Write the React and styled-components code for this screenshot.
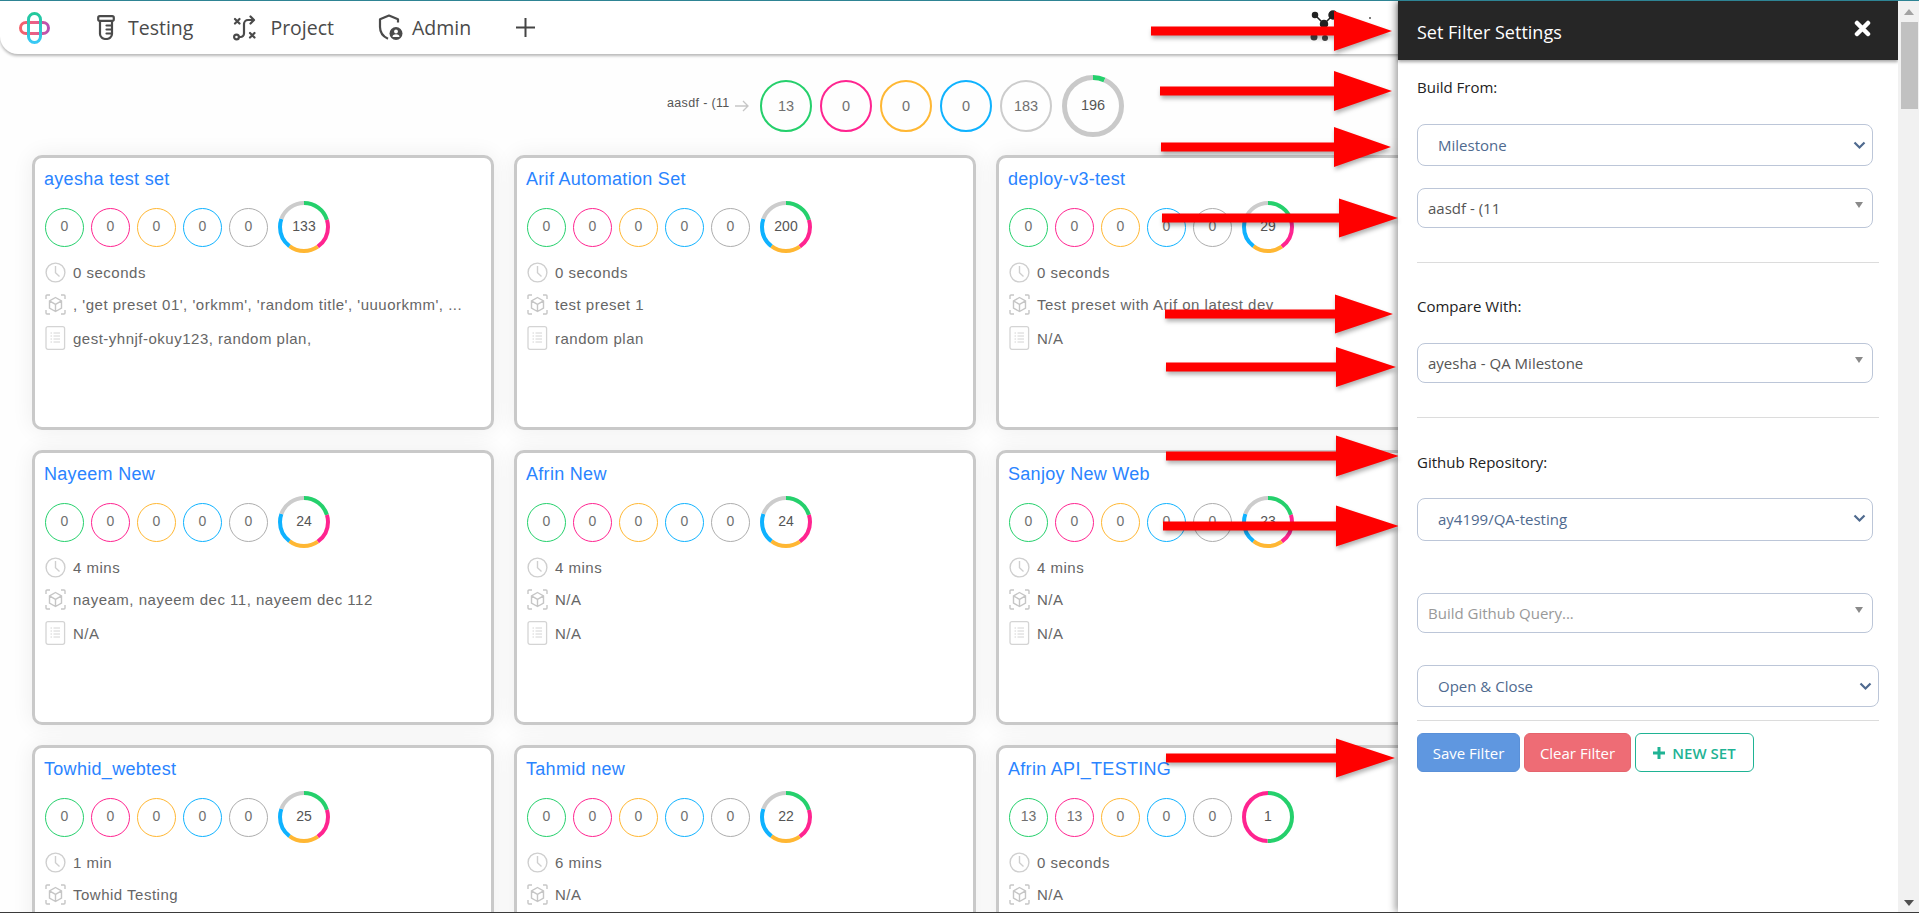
import React from "react";
import styled, { createGlobalStyle } from "styled-components";

const GREEN = "#25d06c";
const PINK = "#ff2490";
const AMBER = "#ffb733";
const BLUE = "#0fb2ff";
const GREY = "#adadad";
const LIGHT = "#cccccc";

const Global = createGlobalStyle`
  html, body { margin: 0; padding: 0; height: 100%; overflow: hidden; background: #fff; }
  #root { height: 100%; }
  * { box-sizing: border-box; }
`;

const Frame = styled.div`
  width: 100vw; height: 100vh; display: flex; overflow: hidden;
  border-top: 1px solid #2e8494; border-bottom: 1px solid #3a3a3a;
  font-family: "Open Sans", sans-serif; background: #fff;
`;
const Main = styled.main`
  flex: 1; min-width: 0; position: relative; overflow: hidden; background: #fefefe;
`;
const TopBar = styled.header`
  height: 53px; display: flex; align-items: center; background: #fff;
  border-bottom-left-radius: 18px; padding-left: 19px;
  box-shadow: 0 2px 3px rgba(0,0,0,.28);
`;
const NavItem = styled.div`
  display: flex; align-items: center; margin-left: ${p => p.$ml}px; gap: ${p => p.$gap}px;
  font-size: 19.5px; color: #4a4a4a; line-height: 24px;
  svg { display: block; flex: none; }
`;
const Summary = styled.section`
  height: 101px; display: flex; align-items: center; padding: 2px 0 0 667px;
`;
const SummaryLabel = styled.span`
  font: 12.5px "Liberation Sans", sans-serif; color: #555; letter-spacing: .35px; width: 64px; white-space: nowrap;
  margin-top: -5px;
`;
const SummaryArrow = styled.svg`
  width: 14px; height: 12px; margin: 0 11px 0 4px; flex: none;
`;
const SummaryCircles = styled.div`
  display: flex; align-items: center; gap: 8px;
  & > :last-child { margin-left: 2px; }
`;
const Grid = styled.section`
  display: grid; grid-template-columns: repeat(3, 462px); grid-auto-rows: 275px; gap: 20px;
  padding-left: 32px;
`;
const Card = styled.article`
  border: 3px solid #c9c9c9; border-radius: 10px; background: #fff; padding: 10px;
  box-shadow: 0 0 22px rgba(0,0,0,.07);
  font-family: "Liberation Sans", sans-serif; overflow: hidden;
`;
const CardTitle = styled.h3`
  margin: 0 0 0 -1px; font-size: 18px; font-weight: 400; color: #2a84ff; line-height: 22px; height: 22px; letter-spacing: .3px;
`;
const Stats = styled.div`
  display: flex; align-items: center; gap: 7px; margin-top: 11px; height: 52px;
  & > :last-child { margin-left: 3px; }
`;
const Circle = styled.div`
  width: ${p => p.$size}px; height: ${p => p.$size}px; border-radius: 50%;
  border: ${p => p.$bw}px solid ${p => p.$color}; flex: none;
  display: flex; align-items: center; justify-content: center;
  font: ${p => p.$fs}px "Liberation Sans", sans-serif; color: #707070; padding-bottom: ${p => p.$pb}px;
`;
const RingWrap = styled.div`
  width: ${p => p.$size}px; height: ${p => p.$size}px; position: relative; flex: none;
  svg { display: block; }
`;
const RingValue = styled.span`
  position: absolute; inset: 0; display: flex; align-items: center; justify-content: center;
  font: ${p => p.$fs}px "Liberation Sans", sans-serif; color: ${p => p.$color}; padding-bottom: 2px;
`;
const Meta = styled.div`
  display: flex; align-items: center; gap: 7px; height: 24px; margin-top: ${p => p.$mt}px;
  font-size: 15px; color: #666; letter-spacing: .5px; white-space: nowrap;
  svg { display: block; flex: none; }
`;
const Panel = styled.aside`
  position: absolute; top: 0; right: 0; bottom: 0; width: 500px; background: #fff;
  box-shadow: -3px 0 7px rgba(0,0,0,.35);
`;
const PanelHeader = styled.div`
  height: 59px; background: #262626; display: flex; align-items: center; justify-content: space-between;
  padding: 0 27px 0 19px; color: #fff; font-size: 18px; box-shadow: 0 2px 3px rgba(0,0,0,.35);
  svg { display: block; margin-top: -5px; }
  span { margin-top: 3px; }
`;
const PanelBody = styled.div`
  padding-left: 19px; width: 481px;
`;
const Label = styled.div`
  font-size: 15px; line-height: 20px; color: #222; margin-top: ${p => p.$mt}px;
`;
const Select = styled.div`
  height: ${p => p.$h}px; width: ${p => p.$w || 456}px; margin-top: ${p => p.$mt}px;
  border: 1px solid #bcc6d8; border-radius: 8px; background: #fff;
  display: flex; align-items: center; justify-content: space-between;
  padding-left: ${p => p.$native ? 20 : 10}px; padding-right: ${p => p.$native ? 6 : 10}px;
  padding-bottom: ${p => p.$pb || 0}px;
  font-size: 15px; color: ${p => p.$native ? "#4f6a8f" : p.$muted ? "#999" : "#555"};
  svg { display: block; flex: none; }
`;
const Triangle = styled.i`
  width: 0; height: 0; border-left: 4px solid transparent; border-right: 4px solid transparent;
  border-top: 6px solid #8a8a8a; margin-top: -7px; margin-right: -1px;
`;
const Divider = styled.hr`
  margin: ${p => p.$mt}px 0 0; border: 0; border-top: 1px solid #dcdcdc; height: 0;
`;
const Buttons = styled.div`
  display: flex; gap: 4px; margin-top: 12px;
`;
const Button = styled.button`
  height: 39px; width: ${p => p.$w}px; border-radius: 6px; font: 15px "Open Sans", sans-serif; padding: 0;
  color: #fff; background: ${p => p.$bg}; border: 1px solid ${p => p.$bd};
`;
const OutlineButton = styled(Button)`
  color: #1fb394; background: #fff; border-color: #1fb394; font-weight: 600; font-size: 15px;
  display: flex; align-items: center; justify-content: center; gap: 7px;
`;
const Scrollbar = styled.div`
  width: 21px; flex: none; background: #f1f1f1; display: flex; flex-direction: column; align-items: center;
  padding: 8px 0 6px 1px; position: relative; z-index: 3;
`;
const Thumb = styled.div`
  width: 17px; height: 87px; background: #c1c1c1; margin-top: 7px; flex: none;
`;
const ScrollSpacer = styled.div`flex: 1;`;
const ArrowLayer = styled.svg`
  position: absolute; left: 0; top: -1px; width: 1398px; height: 913px; pointer-events: none;
  filter: drop-shadow(1px 3px 2px rgba(0,0,0,.3));
`;
const Network = styled.svg`
  position: absolute; left: 1310px; top: 8px;
`;

const Ring = ({ size, stroke, segments, value, fs = 14, color = "#555" }) => {
  const r = (size - stroke) / 2;
  const c = 2 * Math.PI * r;
  let off = 0;
  return (
    <RingWrap $size={size}>
      <svg width={size} height={size}>
        <g transform={`rotate(-90 ${size / 2} ${size / 2})`}>
          {segments.map(([col, f], i) => {
            const el = (
              <circle key={i} cx={size / 2} cy={size / 2} r={r} fill="none" stroke={col} strokeWidth={stroke}
                strokeDasharray={`${f * c} ${c}`} strokeDashoffset={-off * c} />
            );
            off += f;
            return el;
          })}
        </g>
      </svg>
      <RingValue $fs={fs} $color={color}>{value}</RingValue>
    </RingWrap>
  );
};

const EVEN = [[GREEN, .2], [PINK, .2], [AMBER, .2], [BLUE, .2], [LIGHT, .2]];
const SPLIT = [[GREEN, .5], [PINK, .5]];

const Clock = () => (
  <svg width="21" height="21" viewBox="0 0 21 21" fill="none" stroke="#cfcfcf" strokeWidth="1.4">
    <circle cx="10.5" cy="10.5" r="9.4" /><path d="M10.5 4v6.8l4 3.6" />
  </svg>
);
const Cube = () => (
  <svg width="21" height="21" viewBox="0 0 21 21" fill="none" stroke="#c6c6c6" strokeWidth="1.4">
    <path d="M1 5V2a1 1 0 0 1 1-1h3M16 1h3a1 1 0 0 1 1 1v3M20 16v3a1 1 0 0 1-1 1h-3M5 20H2a1 1 0 0 1-1-1v-3" />
    <path d="M10.5 3.500l6 3.400v7.200l-6 3.400-6-3.400V6.900zM4.500 6.900l6 3.500 6-3.500M10.500 10.400v7.100" />
  </svg>
);
const Doc = () => (
  <svg width="21" height="24" viewBox="0 0 21 24" fill="none" stroke="#d4d4d4">
    <rect x="1" y=".7" width="18.600" height="22.600" rx="2" strokeWidth="1.300" />
    <path d="M8.500 7h6.500M8.500 10h6.500M8.500 13h6.500M8.500 16h6.500M5.500 7h1.500M5.500 10h1.500M5.500 13h1.500M5.500 16h1.500" strokeWidth="1" />
  </svg>
);

const Chevron = () => (
  <svg width="13" height="9" viewBox="0 0 13 9" fill="none" stroke="#4f6a8f" strokeWidth="2.2"><path d="M1.5 1.5l5 5 5-5" /></svg>
);

const Logo = () => (
  <svg width="31" height="32" viewBox="0 0 31 32" fill="none" strokeWidth="3">
    <defs>
      <linearGradient id="lh" x1="0" x2="1" y1="0" y2="0"><stop offset="0" stopColor="#f4606a" /><stop offset=".55" stopColor="#e8608a" /><stop offset="1" stopColor="#b64fb4" /></linearGradient>
      <linearGradient id="lv" x1="0" x2="0" y1="0" y2="1"><stop offset="0" stopColor="#23c99a" /><stop offset=".5" stopColor="#2fc7c8" /><stop offset="1" stopColor="#38c8f5" /></linearGradient>
    </defs>
    <rect x="1.5" y="10.500" width="28" height="11" rx="5.500" stroke="url(#lh)" />
    <rect x="9.500" y="1.500" width="12" height="29" rx="6" stroke="url(#lv)" />
    <path d="M9.500 10.500h12" stroke="url(#lh)" />
  </svg>
);
const TubeIcon = () => (
  <svg width="18" height="25" viewBox="0 0 18 25" fill="none" stroke="#4a4a4a" strokeWidth="2.2" strokeLinecap="round">
    <rect x="1.2" y="1.2" width="15.6" height="4.6" rx="1.6" />
    <path d="M3 6v13a6 5 0 0 0 12 0V6M9.5 10.5H15M9.5 14.5H15M9.5 18.5H15" />
  </svg>
);
const RouteIcon = () => (
  <svg width="24" height="26" viewBox="0 0 24 26" fill="none" stroke="#4a4a4a" strokeWidth="2.2" strokeLinecap="round" strokeLinejoin="round">
    <path d="M2 4l4.5 4.5M6.5 4L2 8.5M17 18l4.5 4.5M21.500 18L17 22.500" />
    <circle cx="3.500" cy="22" r="2.400" />
    <path d="M5.900 22h1.600a3.500 3.500 0 0 0 3.500-3.500V9a4 4 0 0 1 4-4h5M17.500 1.500L21 5l-3.500 3.500" />
  </svg>
);
const ShieldIcon = () => (
  <svg width="25" height="27" viewBox="0 0 25 27" fill="none">
    <path d="M20 8.500V5.200L11 1.500 2 5.200V13c0 5.500 3.700 9.800 8 11.800" stroke="#4a4a4a" strokeWidth="2.200" strokeLinejoin="round" />
    <circle cx="18" cy="19.500" r="6.500" fill="#4a4a4a" />
    <circle cx="18" cy="17.500" r="1.900" fill="#fff" />
    <path d="M14.500 23a3.500 2.800 0 0 1 7 0z" fill="#fff" />
  </svg>
);
const PlusIcon = () => (
  <svg width="19" height="19" viewBox="0 0 19 19" stroke="#444" strokeWidth="2"><path d="M9.500 0v19M0 9.500h19" /></svg>
);

const ARROWS = [
  [1151, 31, 1334, 20, 1392], [1160, 91, 1334, 20, 1392], [1161, 147, 1334, 20, 1391],
  [1162, 218, 1339, 19.500, 1398], [1165, 314, 1335, 19.500, 1393], [1166, 367, 1336, 20, 1396],
  [1166, 456, 1336, 20.500, 1399], [1163, 526, 1336, 20.500, 1399], [1166, 758, 1336, 19.500, 1395],
];
const arrowPoints = ([x, y, b, h, t]) =>
  `${x},${y - 4.500} ${b},${y - 4.500} ${b},${y - h} ${t},${y} ${b},${y + h} ${b},${y + 4.500} ${x},${y + 4.500}`;

const CARDS = [
  { title: "ayesha test set", total: 133, time: "0 seconds", presets: ", 'get preset 01', 'orkmm', 'random title', 'uuuorkmm', ...", plans: "gest-yhnjf-okuy123, random plan," },
  { title: "Arif Automation Set", total: 200, time: "0 seconds", presets: "test preset 1", plans: "random plan" },
  { title: "deploy-v3-test", total: 29, time: "0 seconds", presets: "Test preset with Arif on latest dev", plans: "N/A" },
  { title: "Nayeem New", total: 24, time: "4 mins", presets: "nayeam, nayeem dec 11, nayeem dec 112", plans: "N/A" },
  { title: "Afrin New", total: 24, time: "4 mins", presets: "N/A", plans: "N/A" },
  { title: "Sanjoy New Web", total: 23, time: "4 mins", presets: "N/A", plans: "N/A" },
  { title: "Towhid_webtest", total: 25, time: "1 min", presets: "Towhid Testing" },
  { title: "Tahmid new", total: 22, time: "6 mins", presets: "N/A" },
  { title: "Afrin API_TESTING", total: 1, time: "0 seconds", presets: "N/A", counts: [13, 13, 0, 0, 0], segs: SPLIT },
];
const COLORS = [GREEN, PINK, AMBER, BLUE, GREY];

const SetCard = ({ title, total, time, presets, plans, counts = [0, 0, 0, 0, 0], segs = EVEN }) => (
  <Card>
    <CardTitle>{title}</CardTitle>
    <Stats>
      {counts.map((n, i) => (
        <Circle key={i} $size={39} $bw={1.500} $color={COLORS[i]} $fs={14} $pb={2}>{n}</Circle>
      ))}
      <Ring size={52} stroke={4} segments={segs} value={total} fs={14} />
    </Stats>
    <Meta $mt={7}><Clock /><span>{time}</span></Meta>
    <Meta $mt={8}><Cube /><span>{presets}</span></Meta>
    {plans && <Meta $mt={10}><Doc /><span>{plans}</span></Meta>}
  </Card>
);

export default function App() {
  return (
    <>
      <Global />
      <Frame>
        <Main>
          <TopBar>
            <Logo />
            <NavItem $ml={47} $gap={13}><TubeIcon /><span>Testing</span></NavItem>
            <NavItem $ml={40} $gap={13}><RouteIcon /><span>Project</span></NavItem>
            <NavItem $ml={44} $gap={9}><ShieldIcon /><span>Admin</span></NavItem>
            <NavItem $ml={45} $gap={0}><PlusIcon /></NavItem>
          </TopBar>
          <Network width="70" height="40" viewBox="0 0 70 40" fill="#222" stroke="#222" strokeWidth="1.500">
            <circle cx="5" cy="6" r="2.500" /><circle cx="23" cy="6" r="4" /><circle cx="14" cy="15" r="3.500" />
            <path d="M5 6l9 9M23 6l-9 9" />
            <circle cx="4" cy="28" r="3.500" fill="#444" stroke="none" /><circle cx="15" cy="29" r="3" fill="#444" stroke="none" />
            <circle cx="60" cy="9" r="1" fill="#555" stroke="none" />
          </Network>
          <Summary>
            <SummaryLabel>aasdf - (11</SummaryLabel>
            <SummaryArrow viewBox="0 0 14 12" fill="none" stroke="#c6c6c6" strokeWidth="1.300"><path d="M0 6h13M8 1l5 5-5 5" /></SummaryArrow>
            <SummaryCircles>
              <Circle $size={52} $bw={2} $color={GREEN} $fs={14.500} $pb={0}>13</Circle>
              <Circle $size={52} $bw={2} $color={PINK} $fs={14.500} $pb={0}>0</Circle>
              <Circle $size={52} $bw={2} $color={AMBER} $fs={14.500} $pb={0}>0</Circle>
              <Circle $size={52} $bw={2} $color={BLUE} $fs={14.500} $pb={0}>0</Circle>
              <Circle $size={52} $bw={2} $color={LIGHT} $fs={14.500} $pb={0}>183</Circle>
              <Ring size={62} stroke={5} segments={[[GREEN, .066], ["#c9c9c9", .934]]} value={196} fs={14.500} color="#555" />
            </SummaryCircles>
          </Summary>
          <Grid>
            {CARDS.map(c => <SetCard key={c.title} {...c} />)}
          </Grid>
          <Panel>
            <PanelHeader>
              <span>Set Filter Settings</span>
              <svg width="17" height="17" viewBox="0 0 17 17" stroke="#fff" strokeWidth="4.500" strokeLinecap="round"><path d="M3 3l11 11M14 3L3 14" /></svg>
            </PanelHeader>
            <PanelBody>
              <Label $mt={17}>Build From:</Label>
              <Select $native $h={42} $mt={27}>Milestone<Chevron /></Select>
              <Select $h={40} $mt={22}>aasdf - (11<Triangle /></Select>
              <Divider $mt={34} />
              <Label $mt={33}>Compare With:</Label>
              <Select $h={40} $mt={27}>ayesha - QA Milestone<Triangle /></Select>
              <Divider $mt={34} />
              <Label $mt={34}>Github Repository:</Label>
              <Select $native $h={43} $mt={26} $pb={2}>ay4199/QA-testing<Chevron /></Select>
              <Select $muted $h={40} $mt={52}>Build Github Query...<Triangle /></Select>
              <Select $native $h={42} $mt={32} $w={462}>Open &amp; Close<Chevron /></Select>
              <Divider $mt={13} />
              <Buttons>
                <Button $w={103} $bg="#5f97e0" $bd="#5a90d8">Save Filter</Button>
                <Button $w={107} $bg="#ee6c75" $bd="#e5646d">Clear Filter</Button>
                <OutlineButton $w={119}>
                  <svg width="12" height="12" viewBox="0 0 12 12" stroke="#1fb394" strokeWidth="3"><path d="M6 0v12M0 6h12" /></svg>
                  NEW SET
                </OutlineButton>
              </Buttons>
            </PanelBody>
          </Panel>
          <ArrowLayer viewBox="0 0 1398 913">
            {ARROWS.map((a, i) => <polygon key={i} points={arrowPoints(a)} fill="#ff0000" />)}
          </ArrowLayer>
        </Main>
        <Scrollbar>
          <svg width="10" height="6" viewBox="0 0 10 6" fill="#a3a3a3"><path d="M5 0l5 6H0z" /></svg>
          <Thumb />
          <ScrollSpacer />
          <svg width="10" height="6" viewBox="0 0 10 6" fill="#505050"><path d="M0 0h10L5 6z" /></svg>
        </Scrollbar>
      </Frame>
    </>
  );
}
